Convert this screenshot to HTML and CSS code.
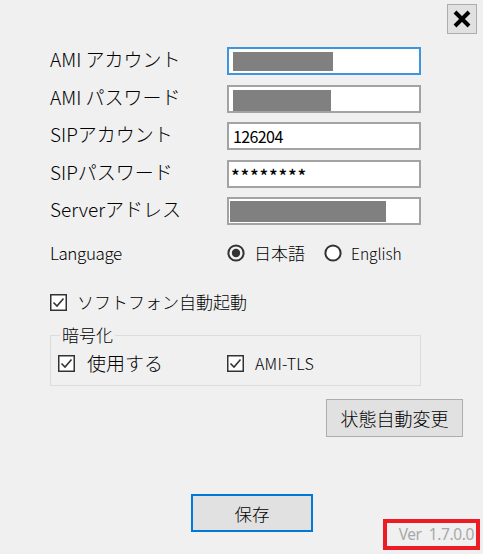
FILE: index.html
```html
<!DOCTYPE html>
<html lang="ja">
<head>
<meta charset="utf-8">
<title>設定</title>
<link rel="stylesheet" href="styles.css">
</head>
<body>
<div class="window">
  <div class="titlebar">
    <button class="close" type="button" aria-label="閉じる">
      <svg width="20" height="20" viewBox="0 0 20 20"><path d="M3 3 L17 17 M17 3 L3 17" stroke="#000" stroke-width="4" stroke-linecap="butt"/></svg>
    </button>
  </div>

  <div class="fields">
    <div class="label">AMI アカウント</div>
    <div class="input focused"><span class="redact r1"></span></div>
    <div class="label">AMI パスワード</div>
    <div class="input"><span class="redact r2"></span></div>
    <div class="label">SIPアカウント</div>
    <div class="input"><span class="value">126204</span></div>
    <div class="label">SIPパスワード</div>
    <div class="input"><span class="value pw">********</span></div>
    <div class="label">Serverアドレス</div>
    <div class="input"><span class="redact r3"></span></div>
  </div>

  <div class="lang">
    <div class="lang-label">Language</div>
    <div class="radios">
      <span class="radio">
        <svg width="18" height="18" viewBox="0 0 18 18"><circle cx="9" cy="9" r="7.6" fill="#f4f4f4" stroke="#333" stroke-width="2"/><circle cx="9" cy="9" r="4.2" fill="#333"/></svg>
        <span class="jp">日本語</span>
      </span>
      <span class="radio">
        <svg width="18" height="18" viewBox="0 0 18 18"><circle cx="9" cy="9" r="7.6" fill="#fff" stroke="#333" stroke-width="2"/></svg>
        <span class="en">English</span>
      </span>
    </div>
  </div>

  <div class="check autostart">
    <svg class="cb" width="17" height="17" viewBox="0 0 17 17"><rect x="0.75" y="0.75" width="15.5" height="15.5" fill="#fff" stroke="#333" stroke-width="1.5"/><path d="M3.5 8.5 L7 12 L13.5 4.5" fill="none" stroke="#333" stroke-width="1.6"/></svg>
    <span class="autostart-text">ソフトフォン自動起動</span>
  </div>

  <fieldset class="group">
    <legend>暗号化</legend>
    <div class="group-row">
      <div class="check use">
        <svg class="cb" width="17" height="17" viewBox="0 0 17 17"><rect x="0.75" y="0.75" width="15.5" height="15.5" fill="#fff" stroke="#333" stroke-width="1.5"/><path d="M3.5 8.5 L7 12 L13.5 4.5" fill="none" stroke="#333" stroke-width="1.6"/></svg>
        <span class="use-text">使用する</span>
      </div>
      <div class="check tls">
        <svg class="cb" width="17" height="17" viewBox="0 0 17 17"><rect x="0.75" y="0.75" width="15.5" height="15.5" fill="#fff" stroke="#333" stroke-width="1.5"/><path d="M3.5 8.5 L7 12 L13.5 4.5" fill="none" stroke="#333" stroke-width="1.6"/></svg>
        <span class="tls-text">AMI-TLS</span>
      </div>
    </div>
  </fieldset>

  <div class="actions">
    <button class="btn auto" type="button">状態自動変更</button>
  </div>

  <div class="footer">
    <button class="btn save" type="button">保存</button>
    <div class="version">Ver&nbsp; 1.7.0.0</div>
  </div>
</div>
</body>
</html>
```
FILE: styles.css
```css
html, body {
  margin: 0;
  padding: 0;
}
body {
  background: #f0f0f0;
  font-family: "Noto Sans CJK JP", "Noto Sans", sans-serif;
  font-weight: 300;
  color: #000;
}
.window {
  width: 483px;
  height: 554px;
  overflow: hidden;
}
.titlebar {
  display: flex;
  justify-content: flex-end;
  padding: 4px 6px 0 0;
  height: 30px;
}
.close {
  width: 30px;
  height: 30px;
  padding: 0;
  margin: 0;
  border: 1px solid #adadad;
  background: #e1e1e1;
  display: flex;
  align-items: center;
  justify-content: center;
}
.fields {
  margin: 13px 0 0 50px;
  display: grid;
  grid-template-columns: 177px 194px;
  grid-auto-rows: 28px;
  row-gap: 9.5px;
  align-items: center;
}
.label {
  font-size: 19px;
  line-height: 24px;
  margin-top: -4px;
  white-space: nowrap;
}
.input {
  box-sizing: border-box;
  height: 28px;
  background: #fff;
  border: 2px solid #a3a3a3;
  position: relative;
  display: flex;
  align-items: center;
  padding-left: 4px;
}
.input.focused {
  border-color: #3d95e0;
}
.redact {
  display: block;
  background: #808080;
}
.r1 { width: 100px; height: 19px; margin-top: 0; }
.r2 { width: 98px; height: 21px; margin-top: 3px; }
.r3 { width: 156px; height: 21px; margin-left: -3px; }
.value {
  font-size: 16px;
  line-height: 20px;
  font-weight: 400;
  letter-spacing: -0.6px;
}
.pw {
  font-size: 18px;
  font-weight: 500;
  letter-spacing: 0.8px;
  margin-left: -2px;
  margin-top: 2px;
}
.lang {
  display: flex;
  align-items: center;
  margin: 18px 0 0 50px;
  height: 20px;
}
.lang-label {
  width: 177px;
  font-size: 17px;
  line-height: 20px;
  letter-spacing: -0.4px;
}
.radios {
  display: flex;
  align-items: center;
}
.radio {
  display: inline-flex;
  align-items: center;
}
.radio svg {
  display: block;
  margin-right: 9px;
}
.jp {
  font-size: 17px;
  line-height: 20px;
  margin-right: 19px;
}
.en {
  font-size: 15.5px;
  line-height: 20px;
}
.check {
  display: flex;
  align-items: center;
}
.cb {
  display: block;
  flex: none;
}
.autostart {
  margin: 29px 0 0 50px;
  height: 20px;
}
.autostart-text {
  font-size: 17px;
  line-height: 20px;
  margin-left: 10px;
}
.group {
  margin: 14px 0 0 50px;
  width: 371px;
  box-sizing: border-box;
  height: 60px;
  border: 1px solid #dcdcdc;
  padding: 0 0 0 7px;
  min-width: 0;
}
.group legend {
  font-size: 17px;
  line-height: 18px;
  padding: 0 2px;
  margin-left: 2px;
}
.group-row {
  display: flex;
  align-items: center;
  margin-top: 8px;
}
.use {
  width: 169px;
}
.use-text {
  font-size: 19px;
  line-height: 22px;
  margin-left: 12px;
}
.tls-text {
  font-size: 16px;
  line-height: 20px;
  margin-left: 11px;
  letter-spacing: 0.2px;
}
.actions {
  display: flex;
  justify-content: flex-end;
  padding-right: 20px;
  margin-top: 13px;
}
.btn {
  font-family: "Noto Sans CJK JP", "Noto Sans", sans-serif;
  font-weight: 300;
  color: #000;
  background: #e1e1e1;
  border: 1px solid #adadad;
  padding: 0;
  margin: 0;
}
.auto {
  width: 137px;
  height: 38px;
  font-size: 18px;
}
.footer {
  display: flex;
  align-items: flex-start;
  margin-top: 57px;
  padding-left: 191px;
}
.save {
  width: 122px;
  height: 38px;
  font-size: 17.5px;
  border: 2px solid #0078d7;
}
.version {
  margin: 25px 0 0 70px;
  box-sizing: border-box;
  width: 97px;
  height: 31px;
  border: 4px solid #ed1c24;
  color: #a8a8a8;
  font-family: "Noto Sans", sans-serif;
  font-weight: 400;
  font-size: 15.5px;
  line-height: 23px;
  text-align: right;
  padding-right: 2px;
  letter-spacing: -0.4px;
  white-space: nowrap;
}
```
